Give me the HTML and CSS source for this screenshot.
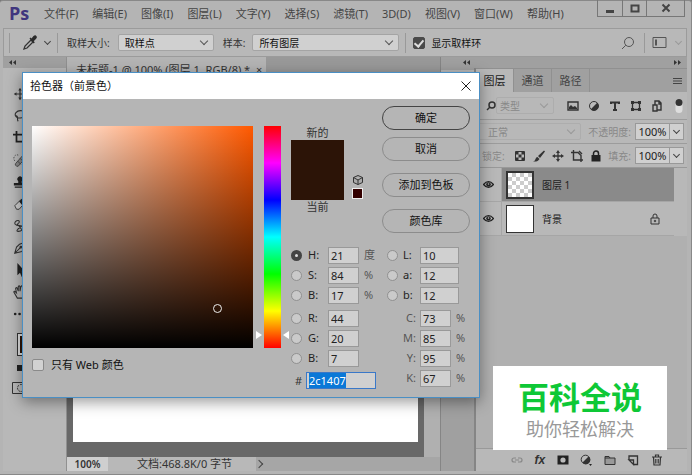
FILE: index.html
```html
<!DOCTYPE html>
<html lang="zh-CN">
<head>
<meta charset="utf-8">
<title>Ps</title>
<link rel="stylesheet" href="styles.css">
</head>
<body>
<div class="app">
  <header class="menubar">
    <span class="brand">Ps</span>
    <nav class="menus">
      <a href="#">文件(F)</a><a href="#">编辑(E)</a><a href="#">图像(I)</a><a href="#">图层(L)</a><a href="#">文字(Y)</a><a href="#">选择(S)</a><a href="#">滤镜(T)</a><a href="#">3D(D)</a><a href="#">视图(V)</a><a href="#">窗口(W)</a><a href="#">帮助(H)</a>
    </nav>
    <div class="window-buttons">
      <button aria-label="最小化"><svg width="10" height="10" viewBox="0 0 10 10"><path d="M1 7h8v3H1z" fill="#444"/></svg></button>
      <button aria-label="最大化"><svg width="10" height="10" viewBox="0 0 10 10"><path d="M1.5 2.5h7v6h-7z" fill="none" stroke="#444" stroke-width="2"/></svg></button>
      <button aria-label="关闭"><svg width="10" height="10" viewBox="0 0 10 10"><path d="M1.5 1.5l7 7M8.500 1.500l-7 7" stroke="#444" stroke-width="2"/></svg></button>
    </div>
  </header>

  <div class="options">
    <i class="divider"></i>
    <button class="tool-pick" aria-label="吸管工具"><svg width="16" height="16" viewBox="0 0 16 16"><path d="M2 14l1-3 6-6 2 2-6 6z" fill="none" stroke="#333" stroke-width="1.3"/><path d="M7.500 3.500l1-1 1 1 2-2.500q2-1.500 3 .2 1 1.600-.6 2.800L11.700 6.200l1.100 1.100-1.100 1.100z" fill="#2b2b2b"/></svg></button>
    <i class="chevron"></i>
    <i class="divider"></i>
    <label for="size">取样大小:</label>
    <span class="pick pick-size"><select id="size"><option>取样点</option></select></span>
    <label for="sample">样本:</label>
    <span class="pick pick-sample"><select id="sample"><option>所有图层</option></select></span>
    <i class="divider"></i>
    <label class="ring"><input type="checkbox" checked>显示取样环</label>
    <div class="options-end">
      <button aria-label="搜索"><svg width="14" height="14" viewBox="0 0 14 14" fill="none" stroke="#555"><circle cx="8" cy="6" r="4.500"/><path d="M4.800 9.200L1 13"/></svg></button>
      <i class="divider"></i>
      <button aria-label="工作区"><svg width="15" height="13" viewBox="0 0 15 13"><path d="M1 1.500h13v10H1z" fill="none" stroke="#555"/><path d="M3 3.500h2v6H3z" fill="#555"/></svg></button>
      <i class="chevron faint"></i>
    </div>
  </div>

  <main class="workspace">
    <aside class="rail">
      <div class="rail-head"><svg width="7" height="5" viewBox="0 0 7 5" fill="#333"><path d="M3 0v5L0 2.500zM7 0v5L4 2.500z"/></svg></div>
      <div class="tools">
        <button aria-label="移动"><svg viewBox="0 0 16 16"><path d="M8 2v12M2 8h12" stroke="#333" stroke-width="1.4"/><path d="M8 1l2 3H6zM8 15l2-3H6zM1 8l3-2v4zM15 8l-3-2v4z" fill="#333"/></svg></button>
        <button aria-label="套索"><svg viewBox="0 0 16 16" fill="none" stroke="#333" stroke-width="1.300"><path d="M5 10C-1 6 5 1 10 2s6 7 0 8-4 0-6-1 0-2 1 0-1 3 1 5"/></svg></button>
        <button aria-label="裁剪"><svg viewBox="0 0 16 16" fill="none" stroke="#222" stroke-width="2"><path d="M4 0v12h12M0 4h12v12"/></svg></button>
        <button aria-label="修复画笔"><svg viewBox="0 0 16 16"><g fill="none" stroke="#444"><path d="M3 12L11 3l3 3-8 9q-2 1-3-1t0-2z" fill="#888"/><path d="M5 9l4 4M8 6l4 4"/><path d="M2 9C-1 5 3 0 7 3" stroke-dasharray="1.500 1.500"/></g></svg></button>
        <button aria-label="仿制图章"><svg viewBox="0 0 16 16" fill="#222"><path d="M6 7a3 3 0 1 1 4 0v2h5v3H1V9h5zM2 13h12v1.500H2z"/></svg></button>
        <button aria-label="橡皮擦"><svg viewBox="0 0 16 16"><path d="M2 10l7-7 5 3-7 8H4z" fill="#ccc" stroke="#333"/><path d="M7 5l3-3 5 4-4 4z" fill="#222"/></svg></button>
        <button aria-label="涂抹"><svg viewBox="0 0 16 16" fill="none" stroke="#333" stroke-width="1.200"><path d="M4 2q-4 3 0 5l6 1q-7 5-5 6c4 1 8-3 9-7M4 2q4-1 3 2L5 6l5 6"/></svg></button>
        <button aria-label="钢笔"><svg viewBox="0 0 16 16" fill="none" stroke="#333" stroke-width="1.200"><path d="M2 14L4 7q3-4 8-5l2 3q-1 5-4 7zL9 7"/><circle cx="9" cy="7" r="1"/></svg></button>
        <button aria-label="路径选择"><svg viewBox="0 0 16 16" fill="#222"><path d="M5 0v14l3-3 2 5 2-1-2-5h4z"/></svg></button>
        <button aria-label="抓手"><svg viewBox="0 0 16 16" fill="none" stroke="#333" stroke-width="1.200"><path d="M5 15L1 8q0-2 3 1L3 4q1-2 2 0l1 3V2q1-2 2 0v5l1-5q1-2 2 0v5l1-4q2-1 2 1l-1 8-2 3z"/></svg></button>
        <button aria-label="更多"><svg viewBox="0 0 16 16" fill="#222"><circle cx="2.500" cy="8" r="1.500"/><circle cx="7.500" cy="8" r="1.500"/><circle cx="12.500" cy="8" r="1.500"/></svg></button>
      </div>
      <span class="tool-color"></span>
      <button class="tool-mini" aria-label="默认颜色"><svg width="14" height="10" viewBox="0 0 14 10"><path d="M5 3h6v7H5z" fill="#222"/><path d="M0 1h7v6H0z" fill="#222"/></svg></button>
      <button class="tool-mask" aria-label="快速蒙版"><svg width="18" height="12" viewBox="0 0 18 12" fill="none" stroke="#333"><path d="M.5.500h17v11H.5z"/><circle cx="9" cy="6" r="3.500" stroke-dasharray="2 1"/></svg></button>
    </aside>

    <section class="document">
      <div class="doc-tabs"><span class="doc-tab">未标题-1 @ 100% (图层 1, RGB/8) * &nbsp;×</span></div>
      <div class="doc-view"><div class="canvas"></div><div class="scroll"></div></div>
      <footer class="status"><b>100%</b><span>文档:468.8K/0 字节</span><i class="arrow"></i></footer>
    </section>

    <section class="dock">
      <div class="dock-head">
        <svg width="7" height="5" viewBox="0 0 7 5" fill="#333"><path d="M3 0v5L0 2.500zM7 0v5L4 2.500z"/></svg>
        <svg width="7" height="5" viewBox="0 0 7 5" fill="#333"><path d="M0 0v5l3-2.500zM4 0v5l3-2.500z"/></svg>
      </div>
      <div class="dock-body">
        <div class="slim"><div class="slim-top"></div></div>
        <div class="panel">
          <div class="tabs"><button class="on">图层</button><button>通道</button><button>路径</button><svg class="burger" width="9" height="8" viewBox="0 0 9 8"><path d="M0 1.500h9M0 4h9M0 6.500h9" stroke="#444"/></svg></div>
          <div class="row filter">
            <label class="kind"><svg width="10" height="10" viewBox="0 0 10 10" fill="none" stroke="#333" stroke-width="1.500"><circle cx="6" cy="4" r="3"/><path d="M4 6L1 9"/></svg><span class="pick ghost"><select><option>类型</option></select></span></label>
            <div class="filter-icons">
              <svg width="12" height="12" viewBox="0 0 12 12"><path d="M1 2h10v8H1z" fill="none" stroke="#333" stroke-width="1.400"/><path d="M2 9V7l2-2 2 2 2-1 2 2v1z" fill="#333"/></svg>
              <svg width="12" height="12" viewBox="0 0 12 12"><circle cx="6" cy="6" r="4.500" fill="#bbb" stroke="#333"/><path d="M9.200 2.800A4.500 4.500 0 1 1 2.800 9.200z" fill="#333"/></svg>
              <svg width="12" height="12" viewBox="0 0 12 12"><path d="M2 4V2.500h8V4M6 2.500V10M4 10h4" fill="none" stroke="#333" stroke-width="2"/></svg>
              <svg width="12" height="12" viewBox="0 0 12 12"><path d="M2.500 2.500h7v7h-7z" fill="none" stroke="#333" stroke-width="1.300"/><path d="M1 1h3v3H1zM8 1h3v3H8zM1 8h3v3H1zM8 8h3v3H8z" fill="#333"/></svg>
              <svg width="12" height="12" viewBox="0 0 12 12" fill="none" stroke="#333" stroke-width="1.400"><path d="M4 5V1h4l2 2v7H6M8 1v3h2M2 5h4v6H2z"/></svg>
              <svg class="toggle" width="8" height="16" viewBox="0 0 8 16"><rect x=".5" y="1" width="7" height="14" rx="3.500" fill="#ddd"/><circle cx="4" cy="4.500" r="3.500" fill="#333"/></svg>
            </div>
          </div>
          <div class="row blend">
            <span class="pick ghost mode"><select aria-label="混合模式"><option>正常</option></select></span>
            <label for="opacity">不透明度:</label>
            <span class="combo"><input id="opacity" value="100%"><button aria-label="展开"><i class="chevron"></i></button></span>
          </div>
          <div class="row locks">
            <span class="dim">锁定:</span>
            <div class="lock-icons">
              <svg width="12" height="12" viewBox="0 0 12 12"><path d="M1.500 1.500h9v9h-9z" fill="none" stroke="#333"/><path d="M2 2h2.500v2.500H2zM7.500 2H10v2.500H7.500zM4.500 4.500h3v3h-3zM2 7.500h2.500V10H2zM7.500 7.500H10V10H7.500z" fill="#333"/></svg>
              <svg width="12" height="12" viewBox="0 0 12 12" fill="#333"><path d="M11 .5L12 1.500 7 8 5 6zM4.500 7l2 2Q5 12 0 11.500 2 11 2.500 9t2-2z"/></svg>
              <svg width="12" height="12" viewBox="0 0 12 12"><path d="M6 2v8M2 6h8" stroke="#333" stroke-width="1.300"/><path d="M6 0l2 3H4zM6 12l2-3H4zM0 6l3-2v4zM12 6L9 4v4z" fill="#333"/></svg>
              <svg width="12" height="12" viewBox="0 0 12 12" fill="none" stroke="#333" stroke-width="1.400"><path d="M0 2.500h7l3 3V12M2.500 0v10H12M8 1l3 3"/></svg>
              <svg width="12" height="12" viewBox="0 0 12 12"><path d="M1.500 5h9v6.500h-9z" fill="#222"/><path d="M3.500 5V3.500a2.500 2.500 0 0 1 5 0V5" fill="none" stroke="#222" stroke-width="1.500"/></svg>
            </div>
            <label for="fill">填充:</label>
            <span class="combo"><input id="fill" value="100%"><button aria-label="展开"><i class="chevron"></i></button></span>
          </div>
          <ul class="layers">
            <li class="layer selected">
              <span class="eye"><svg width="11" height="9" viewBox="0 0 11 9"><path d="M.5 4.500Q5.500-1.500 10.500 4.500 5.500 10.500.5 4.500z" fill="#aaa" stroke="#222" stroke-width="1.200"/><circle cx="5.500" cy="4.500" r="2.300" fill="#222"/><circle cx="5.500" cy="4" r=".8" fill="#bbb"/></svg></span>
              <span class="thumb checker"></span><span class="name">图层 1</span>
            </li>
            <li class="layer">
              <span class="eye"><svg width="11" height="9" viewBox="0 0 11 9"><path d="M.5 4.500Q5.500-1.500 10.500 4.500 5.500 10.500.5 4.500z" fill="#ccc" stroke="#222" stroke-width="1.200"/><circle cx="5.500" cy="4.500" r="2.300" fill="#222"/><circle cx="5.500" cy="4" r=".8" fill="#ccc"/></svg></span>
              <span class="thumb"></span><span class="name">背景</span>
              <svg class="locked" width="10" height="12" viewBox="0 0 10 12" fill="none" stroke="#333"><path d="M1 5h8v6H1zM3 5V3q0-2 2-2t2 2v2"/><circle cx="5" cy="8" r=".8"/></svg>
            </li>
          </ul>
          <div class="empty"></div>
          <footer class="panel-foot">
            <svg width="12" height="12" viewBox="0 0 12 12" fill="none" stroke="#888" stroke-width="1.200"><path d="M5 4H3a2 2 0 0 0 0 4h2M7 4h2a2 2 0 0 1 0 4H7M4 6h4"/></svg>
            <em>fx</em>
            <svg width="12" height="12" viewBox="0 0 12 12"><path d="M.5 1.500h11v9H.5z" fill="#222"/><circle cx="6" cy="6" r="2.600" fill="#bbb"/></svg>
            <svg width="12" height="12" viewBox="0 0 12 12"><circle cx="5.500" cy="5.500" r="4.300" fill="#bbb" stroke="#333"/><path d="M8.500 2.500A4.300 4.300 0 1 1 2.500 8.500z" fill="#333"/><path d="M9 10h3l-1.500 2z" fill="#222"/></svg>
            <svg width="12" height="12" viewBox="0 0 12 12" fill="#999" stroke="#333"><path d="M1 2.500h4l1 1.500h5v6.500H1zM1 4h5"/></svg>
            <svg width="12" height="12" viewBox="0 0 12 12" fill="none" stroke="#333" stroke-width="1.300"><path d="M2 6V2h8.500v8.500H7M2 6h4.500v4.500zM6.500 6v4.500"/></svg>
            <svg width="12" height="12" viewBox="0 0 12 12" fill="none" stroke="#333" stroke-width="1.200"><path d="M1 3h10M4.500 2.500V1h3v1.500M2.500 3l.5 8h6l.5-8M4.800 5v4.500M7.200 5v4.500"/></svg>
          </footer>
        </div>
      </div>
    </section>
  </main>

  <div class="dialog" role="dialog" aria-labelledby="dlg-title">
    <header class="dialog-head"><span id="dlg-title">拾色器（前景色）</span><button aria-label="关闭"><svg width="10" height="10" viewBox="0 0 10 10"><path d="M.5.500l9 9M9.500.500l-9 9" stroke="#222"/></svg></button></header>
    <div class="dialog-body">
      <div class="left">
        <div class="spectrum">
          <div class="field"><i class="ring-mark"></i></div>
          <div class="hue"><i class="hue-left"></i><i class="hue-right"></i></div>
        </div>
        <label class="web"><input type="checkbox">只有 Web 颜色</label>
      </div>
      <div class="right">
        <div class="top">
          <div class="compare"><span>新的</span><div class="swatch"></div><span>当前</span></div>
          <div class="warn"><svg width="10" height="10" viewBox="0 0 10 10" fill="#aaa" stroke="#333"><path d="M5 .5l4.500 2v5L5 9.500l-4.500-2v-5zM.5 2.500L5 5l4.500-2.500M5 5v4.500"/></svg><i class="safe"></i></div>
          <div class="actions"><button class="primary">确定</button><button>取消</button><button>添加到色板</button><button>颜色库</button></div>
        </div>
        <div class="values">
          <div class="col">
            <div class="val"><input type="radio" name="m" id="rh" checked><label for="rh">H:</label><input class="num" aria-label="H" value="21"><span>度</span></div>
            <div class="val"><input type="radio" name="m" id="rs"><label for="rs">S:</label><input class="num" aria-label="S" value="84"><span>%</span></div>
            <div class="val"><input type="radio" name="m" id="rb"><label for="rb">B:</label><input class="num" aria-label="B" value="17"><span>%</span></div>
            <div class="val split"><input type="radio" name="m" id="rr"><label for="rr">R:</label><input class="num" aria-label="R" value="44"></div>
            <div class="val"><input type="radio" name="m" id="rg"><label for="rg">G:</label><input class="num" aria-label="G" value="20"></div>
            <div class="val"><input type="radio" name="m" id="rbl"><label for="rbl">B:</label><input class="num" aria-label="B" value="7"></div>
            <div class="hex"><label for="hex">#</label><span class="hex-box"><input id="hex" value="2c1407"></span></div>
          </div>
          <div class="col second">
            <div class="val"><input type="radio" name="m" id="rl"><label for="rl">L:</label><input class="num wide" aria-label="L" value="10"></div>
            <div class="val"><input type="radio" name="m" id="ra"><label for="ra">a:</label><input class="num wide" aria-label="a" value="12"></div>
            <div class="val"><input type="radio" name="m" id="rlb"><label for="rlb">b:</label><input class="num wide" aria-label="b" value="12"></div>
            <div class="val split cmyk"><label for="c">C:</label><input class="num" id="c" value="73"><span>%</span></div>
            <div class="val cmyk"><label for="mm">M:</label><input class="num" id="mm" value="85"><span>%</span></div>
            <div class="val cmyk"><label for="y">Y:</label><input class="num" id="y" value="95"><span>%</span></div>
            <div class="val cmyk"><label for="k">K:</label><input class="num" id="k" value="67"><span>%</span></div>
          </div>
        </div>
      </div>
    </div>
  </div>

  <div class="watermark"><strong>百科全说</strong><span>助你轻松解决</span></div>
</div>
<script src="main.js"></script>
</body>
</html>
```
FILE: main.js
```js
const hex = document.getElementById('hex');
hex.focus();
hex.select();
```
FILE: styles.css
```css
* { box-sizing: border-box; }
body {
  margin: 0;
  font: 11px/14px "Noto Sans", "Noto Sans CJK SC", sans-serif;
  color: #333;
  background: #777;
}
button, input, select { font: inherit; color: inherit; margin: 0; padding: 0; border: 0; background: none; border-radius: 0; }
button { display: flex; align-items: center; justify-content: center; }
a { color: inherit; text-decoration: none; }
svg { display: block; flex: none; }

.app {
  position: relative;
  display: flex;
  flex-direction: column;
  min-height: 100vh;
  padding: 0 4px 3px 3px;
  background: #b4b4b4;
  border: 1px solid #888;
  border-width: 1px 1px 1px 0;
  border-radius: 3px 3px 0 0;
}

.menubar { display: flex; align-items: flex-start; height: 27px; }
.brand { width: 41px; padding-left: 6px; font: bold 18px/25px "Open Sans", sans-serif; color: #40367e; }
.menus { display: flex; gap: 14px; line-height: 26px; white-space: nowrap; color: #444; }
.window-buttons { display: flex; margin: -1px 2px 0 auto; border: 1px solid #777; border-top: 0; }
.window-buttons button { width: 24px; height: 16px; }
.window-buttons button + button { border-left: 1px solid #777; }
.window-buttons button:last-child { width: 38px; }

.options { display: flex; align-items: center; height: 29px; padding: 0 3px 0 5px; border: 1px solid #9b9b9b; background: #b8b8b8; font-size: 10px; white-space: nowrap; }
.divider { width: 1px; height: 20px; background: #999; flex: none; }
.tool-pick { margin: 0 5px 0 12px; }
.chevron { width: 5px; height: 5px; margin: 0 2px 3px; border: solid #444; border-width: 0 1px 1px 0; transform: rotate(45deg); flex: none; }
.chevron.faint { border-color: #999; margin-left: 9px; }
.chevron + .divider { margin: 0 9px 0 5px; }
.pick { position: relative; display: block; }
.pick::after { content: ""; position: absolute; right: 7px; top: 4px; width: 5px; height: 5px; border: solid #555; border-width: 0 1px 1px 0; transform: rotate(45deg); }
.pick select { appearance: none; width: 100%; height: 17px; padding: 0 6px; background: #d0d0d0; border: 1px solid #a4a4a4; border-radius: 2px; color: #111; }
.pick-size { width: 96px; margin: 0 9px 0 8px; }
.pick-sample { width: 147px; margin: 0 6px 0 7px; }
.ring { display: flex; align-items: center; gap: 6px; margin-left: 7px; color: #111; }
input[type=checkbox] { appearance: none; width: 12px; height: 12px; border: 1px solid #8a8a8a; border-radius: 2px; background: #d2d2d2; }
input[type=checkbox]:checked { display: grid; place-items: center; background: #4a4a4a; border-color: #4a4a4a; }
input[type=checkbox]:checked::after { content: ""; width: 4px; height: 7px; margin-bottom: 2px; border: solid #ddd; border-width: 0 2px 2px 0; transform: rotate(40deg); }
.options-end { display: flex; align-items: center; margin-left: auto; }
.options-end .divider { margin: 0 7px 0 9px; }

.workspace { display: flex; flex: 1; }
.rail { display: flex; flex-direction: column; width: 64px; border-right: 1px solid #909090; background: #b8b8b8; }
.rail-head { height: 11px; padding: 3px 6px; background: #a0a0a0; }
.tools { display: flex; flex-direction: column; padding: 15px 0 3px 9px; }
.tools button { width: 16px; height: 22px; }
.tools svg { width: 14px; height: 14px; }
.tool-color { width: 18px; height: 21px; margin: 6px 0 0 15px; border: 2px solid #ddd; outline: 1px solid #333; background: #2c1407; }
.tool-mini { align-self: flex-start; margin: 9px 0 0 14px; }
.tool-mask { align-self: flex-start; margin: 8px 0 0 9px; }

.document { display: flex; flex-direction: column; flex: 1; }
.doc-tabs { height: 25px; background: #999; }
.doc-tab { display: inline-block; width: 199px; height: 25px; padding: 6px 0 0 9px; background: #b4b4b4; white-space: nowrap; }
.doc-view { display: flex; flex: 1; background: #686868; }
.canvas { flex: 1; margin: 0 6px 15px; background: #fff; }
.scroll { width: 16px; background: #b0b0b0; }
.status { display: flex; align-items: center; height: 14px; background: #a6a6a6; line-height: 14px; }
.status b { width: 41px; text-align: center; font-size: 10px; font-weight: 600; background: #cfcfcf; }
.status span { width: 148px; padding-left: 29px; background: #b8b8b8; white-space: nowrap; font-size: 11px; }
.arrow { width: 6px; height: 6px; border: solid #444; border-width: 1px 1px 0 0; transform: rotate(45deg); }

.dock { display: flex; flex-direction: column; width: 247px; border-left: 1px solid #858585; background: #a0a0a0; }
.dock-head { display: flex; justify-content: space-between; height: 11px; padding: 3px 6px 0 22px; }
.dock-body { display: flex; flex: 1; }
.slim { width: 35px; padding-top: 2px; border-right: 2px solid #858585; }
.slim-top { height: 190px; background: #b8b8b8; }
.panel { display: flex; flex-direction: column; flex: 1; background: #b8b8b8; }
.tabs { display: flex; height: 24px; background: #a0a0a0; border-top: 1px solid #909090; }
.tabs button { width: 38px; border-right: 1px solid #909090; color: #444; }
.tabs .on { background: #b8b8b8; color: #222; }
.burger { margin: 8px 5px 0 auto; }
.row { display: flex; align-items: center; height: 24px; padding-right: 3px; border-bottom: 1px solid #9c9c9c; font-size: 10px; white-space: nowrap; color: #888; }
.filter { height: 28px; }
.kind { display: flex; align-items: center; padding-left: 10px; }
.ghost select { background: none; border-color: #adadad; color: #888; height: 17px; padding: 0 3px; }
.kind .ghost { width: 58px; }
.ghost::after { border-color: #999; }
.filter-icons { display: flex; align-items: center; gap: 9px; margin-left: 13px; }
.toggle { margin-left: 3px; }
.mode { flex: 1; margin: 0 7px 0 2px; }
.mode select { padding-left: 9px; }
.combo { display: flex; width: 49px; height: 17px; margin-left: 4px; border: 1px solid #999; background: #d0d0d0; color: #222; font-size: 11px; }
.combo input { flex: 1; min-width: 0; text-align: center; }
.combo button { width: 14px; border-left: 1px solid #999; }
.locks { border-color: #999; }
.dim { padding-left: 6px; }
.lock-icons { display: flex; gap: 7px; margin: 0 auto 0 9px; }
.layers { list-style: none; margin: 0 13px 0 0; padding: 0; font-size: 10px; color: #222; }
.layer { display: flex; align-items: center; height: 34px; border-bottom: 1px solid #a6a6a6; }
.selected { background: #8a8a8a; }
.eye { display: grid; place-items: center; align-self: stretch; width: 26px; background: #b8b8b8; border-right: 1px solid #a6a6a6; }
.thumb { width: 28px; height: 28px; margin: 0 8px 0 4px; background: #fff; border: 1px solid #333; }
.checker { border: 2px solid #333; background: conic-gradient(#ccc 25%, #fff 0 50%, #ccc 0 75%, #fff 0) 0 0 / 8px 8px; }
.name { flex: 1; }
.locked { margin-right: 14px; }
.empty { flex: 1; background: #b0b0b0; border-bottom: 1px solid #999; }
.panel-foot { display: flex; align-items: center; justify-content: space-between; height: 22px; padding: 0 24px 0 35px; }
.panel-foot em { font: italic bold 12px/14px "Liberation Sans", sans-serif; }

.dialog { position: absolute; left: 22px; top: 71px; width: 458px; background: #b5b5b5; border: 1px solid #4a8fc4; box-shadow: 0 4px 14px rgba(0, 0, 0, .4); }
.dialog-head { display: flex; align-items: center; justify-content: space-between; height: 26px; padding: 0 8px 0 7px; background: #fff; color: #111; }
.dialog-body { display: flex; gap: 10px; padding: 7px 9px 8px; }
.left { padding-top: 20px; }
.spectrum { display: flex; gap: 11px; }
.field { position: relative; width: 221px; height: 222px; background: linear-gradient(to top, #000, transparent), linear-gradient(to right, #fff, #ff5900); }
.ring-mark { position: absolute; left: 181px; top: 178px; width: 9px; height: 9px; border: 1px solid #eee; border-radius: 50%; }
.hue { position: relative; width: 17px; background: linear-gradient(#f00, #f0f, #00f, #0ff, #0f0, #ff0, #f00); }
.hue-left, .hue-right { position: absolute; top: 205px; border: solid transparent; border-width: 4px 0; }
.hue-left { left: -8px; border-left: 6px solid #fff; }
.hue-right { right: -8px; border-right: 6px solid #fff; }
.web { display: flex; align-items: center; gap: 7px; margin-top: 10px; color: #111; }
.right { flex: 1; }
.top { display: flex; }
.compare { width: 53px; padding-top: 20px; text-align: center; }
.swatch { height: 60px; background: #2c1407; }
.warn { display: flex; flex-direction: column; align-items: center; gap: 3px; margin: 69px 0 0 8px; }
.safe { width: 11px; height: 11px; background: #300; border: 1px solid #eee; }
.actions { margin-left: auto; }
.actions button { width: 88px; height: 24px; margin-bottom: 12px; border: 1px solid #8c8c8c; border-radius: 12px; color: #111; }
.actions .primary { margin-bottom: 7px; border-color: #444; }
.values { display: flex; justify-content: space-between; }
.val { display: flex; align-items: center; height: 20px; }
.split { margin-top: 3px; }
.val label { width: 26px; padding-left: 6px; color: #222; }
.val span { padding-left: 5px; color: #555; }
input[type=radio] { appearance: none; width: 11px; height: 11px; border: 1px solid #909090; border-radius: 50%; background: #cacaca; }
input[type=radio]:checked { border: 4px solid #444; background: #ddd; }
.num { width: 31px; height: 17px; padding-left: 2px; border: 1px solid #999; background: #d0d0d0; color: #222; }
.wide { width: 39px; }
.second { width: 83px; }
.second label { width: 22px; padding-left: 5px; }
.second .cmyk label { width: 33px; padding: 0 4px 0 0; text-align: right; color: #555; }
.hex { display: flex; align-items: center; margin-top: 4px; }
.hex label { width: 15px; padding-left: 4px; }
.hex-box { width: 70px; height: 17px; border: 1px solid #3a78c8; background: #d0d0d0; }
.hex input { display: block; width: 100%; height: 15px; padding-left: 2px; outline: 0; }
.hex input::selection { background: #0a78d7; color: #fff; }

.watermark { position: absolute; right: 24px; bottom: 24px; width: 174px; height: 84px; padding-top: 14px; background: #fff; text-align: center; font-family: "Liberation Sans", "Noto Sans CJK SC", sans-serif; }
.watermark strong { display: block; font-size: 31px; line-height: 38px; font-weight: 700; color: #0ec836; }
.watermark span { font-size: 18px; line-height: 24px; color: #999; display: block; }
```
